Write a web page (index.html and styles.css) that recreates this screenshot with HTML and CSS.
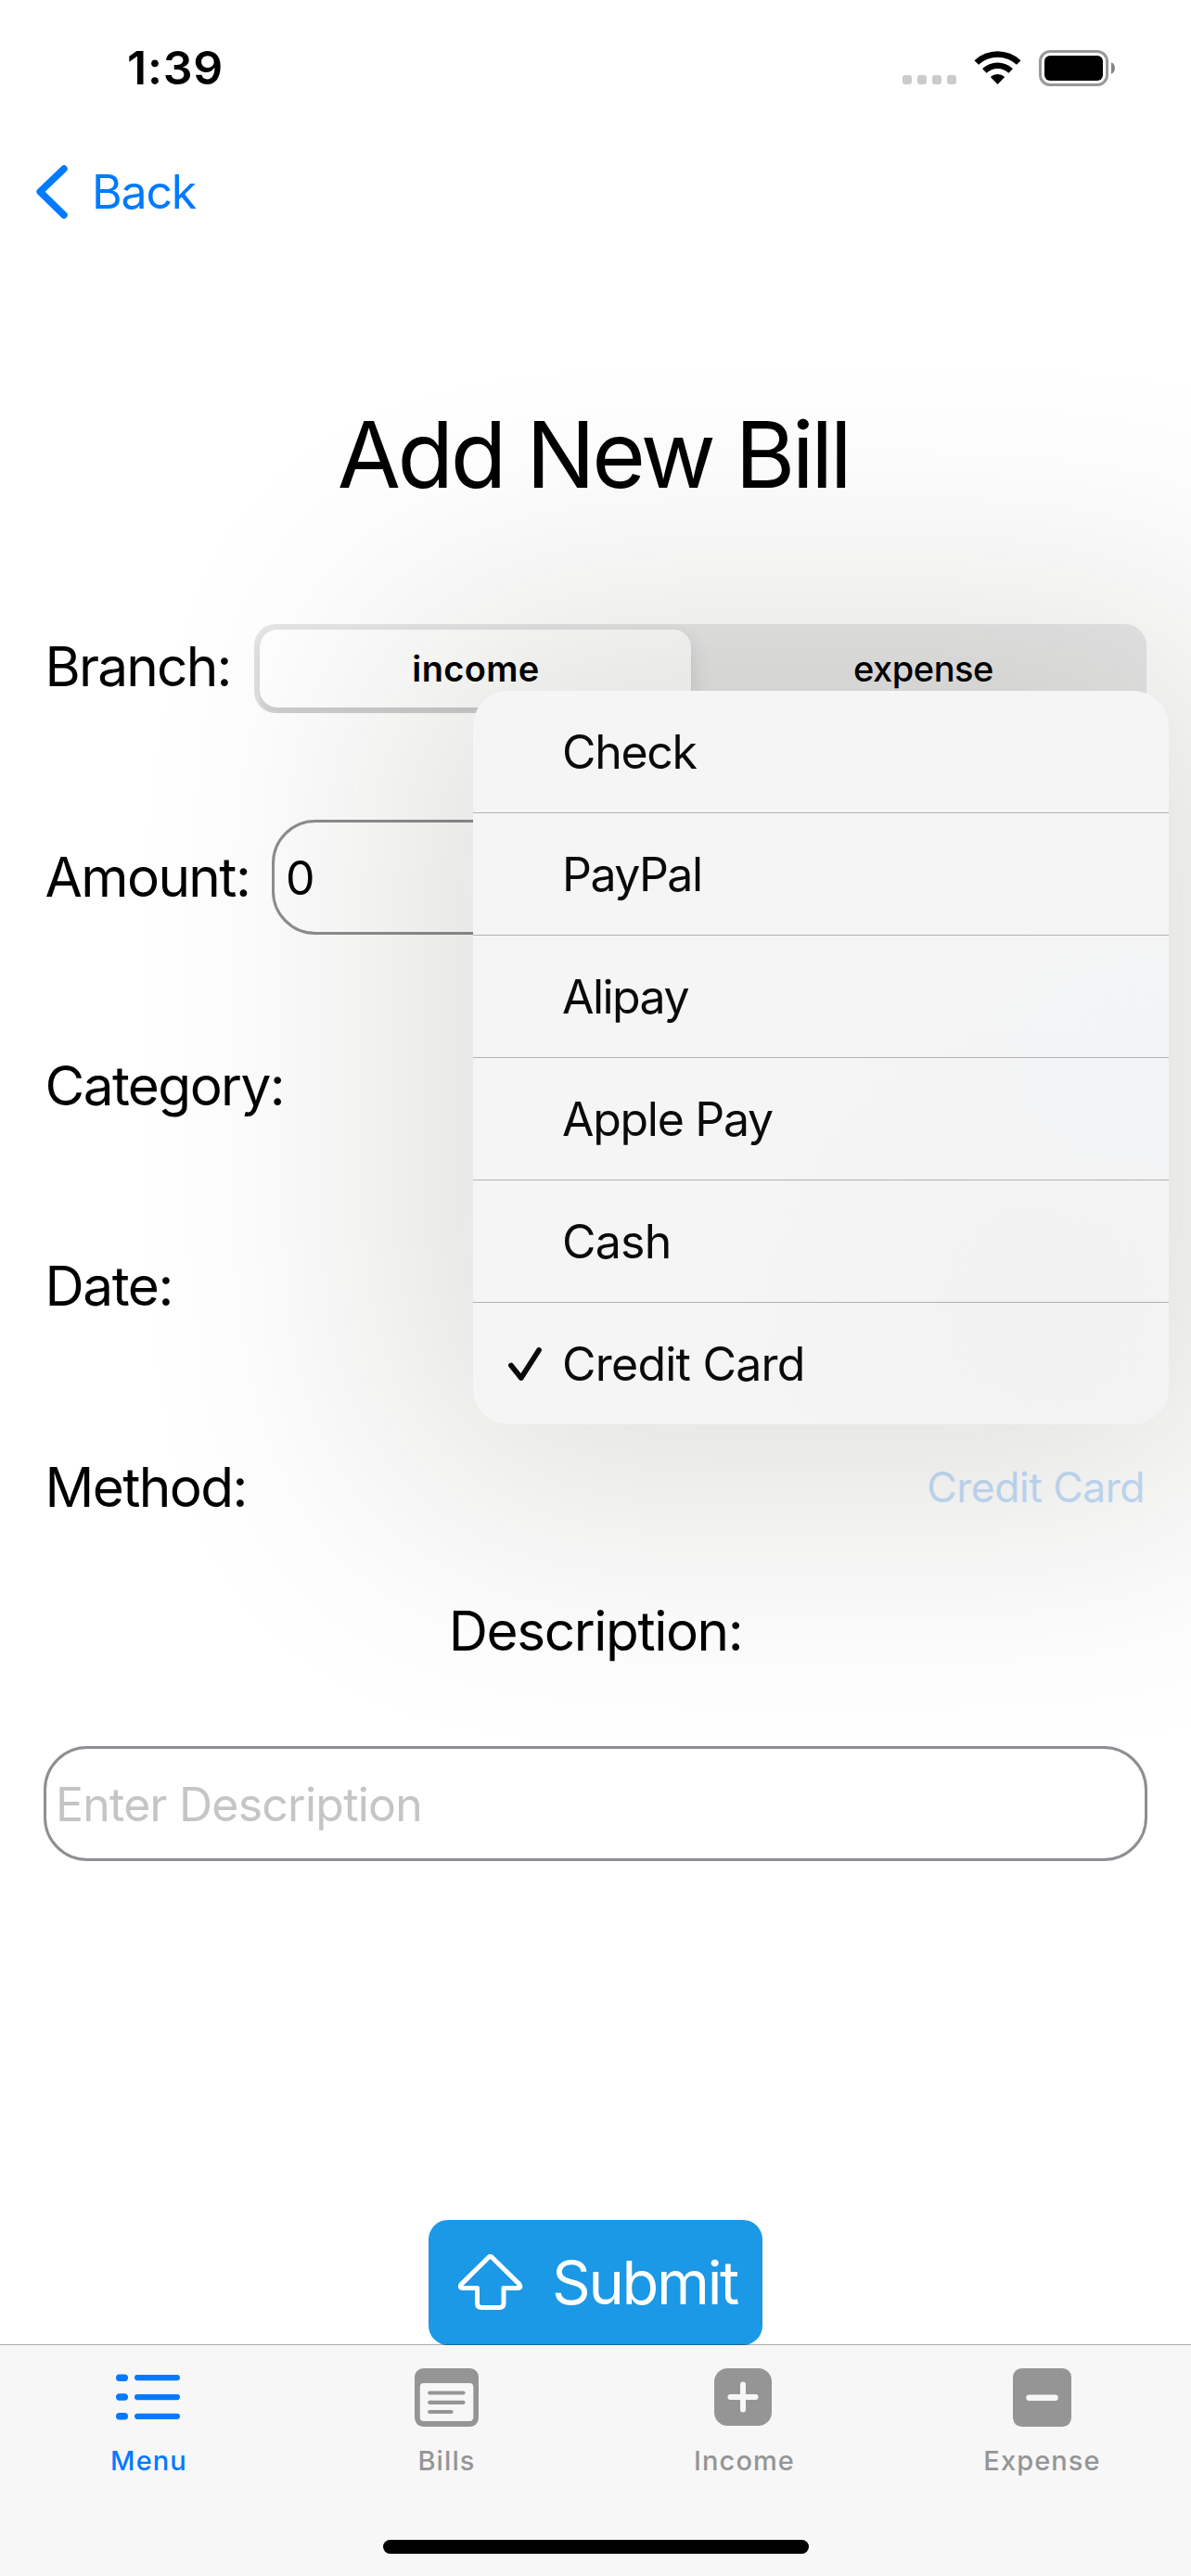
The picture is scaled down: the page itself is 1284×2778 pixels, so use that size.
FILE: index.html
```html
<!DOCTYPE html>
<html lang="en">
<head>
<meta charset="utf-8">
<title>Add New Bill</title>
<link rel="stylesheet" href="styles.css">
</head>
<body>
<div class="screen">
  <header class="status-bar">
    <span class="time">1:39</span>
    <div class="status-icons">
      <svg class="cellular" width="58" height="10" viewBox="0 0 58 10" fill="#cbcbcb">
        <rect width="10" height="10" rx="3"/><rect x="16" width="10" height="10" rx="3"/><rect x="32" width="10" height="10" rx="3"/><rect x="48" width="10" height="10" rx="3"/>
      </svg>
      <svg class="wifi" width="51" height="38" viewBox="0 0 51 38">
        <path d="M0.5 11.2 A36.5 36.5 0 0 1 50.5 11.2 L46 15.8 A30 30 0 0 0 5 15.8 Z"/>
        <path d="M9 20 A24 24 0 0 1 42 20 L37.4 24.7 A17.5 17.5 0 0 0 13.6 24.7 Z"/>
        <path d="M17.8 29 A11.5 11.5 0 0 1 33.2 29 L25.5 37 Z"/>
      </svg>
      <svg class="battery" width="83" height="39" viewBox="0 0 83 39">
        <rect x="1.5" y="1.5" width="72" height="36" rx="10.5" fill="none" stroke="#999" stroke-width="3"/>
        <rect x="6" y="6" width="63" height="27" rx="6"/>
        <path d="M78 13.2 C83.3 15.4 83.3 23.6 78 25.8 Z" fill="#858585"/>
      </svg>
    </div>
  </header>

  <nav class="nav-bar">
    <svg class="chevron" width="34" height="58" viewBox="0 0 34 58"><path d="M30 4 L4.2 28.8 L30 54" fill="none" stroke="#007aff" stroke-width="7.5" stroke-linecap="round" stroke-linejoin="round"/></svg>
    <span class="back">Back</span>
  </nav>

  <main class="form">
    <h1 class="title">Add New Bill</h1>
    <div class="row row-branch">
      <label class="label label-branch">Branch:</label>
      <div class="segmented">
        <span class="segment segment-on">income</span>
        <span class="segment segment-off">expense</span>
      </div>
    </div>
    <div class="row row-amount">
      <label class="label label-amount">Amount:</label>
      <div class="field field-amount">0</div>
    </div>
    <div class="row row-category"><label class="label label-category">Category:</label></div>
    <div class="row row-date"><label class="label label-date">Date:</label></div>
    <div class="row row-method">
      <label class="label label-method">Method:</label>
      <span class="method-value">Credit Card</span>
    </div>
    <div class="row row-description"><label class="label label-description">Description:</label></div>
    <div class="field field-description">Enter Description</div>
    <button class="submit">
      <svg width="70" height="61" viewBox="0 0 70 61"><path d="M32.9 3.2 Q34.6 1.7 36.3 3.2 L66 32.4 Q68.5 37 64 36.4 H49 V53 Q49 57.5 44.5 57.5 H25 Q20.500 57.500 20.500 53 V36.400 H5 Q.8 36.500 3.300 32.400 Z" fill="none" stroke="#fff" stroke-width="5" stroke-linejoin="round"/></svg>
      <span>Submit</span>
    </button>
  </main>

  <footer class="tab-bar">
    <div class="tabs">
      <div class="tab tab-active">
        <svg class="tab-icon" width="70" height="64" viewBox="0 0 70 64" fill="#007aff">
          <rect x="0" y="6.500" width="13" height="7.500" rx="3.750"/><rect x="20" y="7" width="49" height="6.200" rx="3.100"/>
          <rect x="0" y="27.200" width="13" height="7.500" rx="3.750"/><rect x="20" y="28" width="49" height="6.200" rx="3.100"/>
          <rect x="0" y="48" width="13" height="7.500" rx="3.750"/><rect x="20" y="48.700" width="49" height="6.200" rx="3.100"/>
        </svg>
        <span>Menu</span>
      </div>
      <div class="tab">
        <svg class="tab-icon" width="70" height="64" viewBox="0 0 70 64">
          <rect x="1" y="0" width="69" height="63" rx="9.500" fill="#959595"/>
          <rect x="6.800" y="16" width="57.500" height="41" rx="4" fill="#f7f7f7"/>
          <path d="M17.200 26.500 H53.500 M17.200 36.800 H53.500 M17.200 47 H40.500" stroke="#959595" stroke-width="4.200" stroke-linecap="round"/>
        </svg>
        <span>Bills</span>
      </div>
      <div class="tab">
        <svg class="tab-icon tab-icon-plus" width="62" height="64" viewBox="0 0 62 64">
          <rect width="62" height="62" rx="14.500" fill="#959595"/>
          <path d="M17.500 31 H44.500 M31 17.500 V44.500" stroke="#f7f7f7" stroke-width="6" stroke-linecap="round"/>
        </svg>
        <span>Income</span>
      </div>
      <div class="tab">
        <svg width="63" height="64" viewBox="0 0 63 64">
          <rect width="63" height="63" rx="9.500" fill="#959595"/>
          <path d="M17.500 31.700 H45.500" stroke="#f7f7f7" stroke-width="6.500" stroke-linecap="round"/>
        </svg>
        <span>Expense</span>
      </div>
    </div>
    <div class="home-indicator"></div>
  </footer>

  <div class="menu-shadow"></div>
  <ul class="menu">
    <li class="menu-item">Check</li>
    <li class="menu-item menu-item-tight">PayPal</li>
    <li class="menu-item menu-item-tight">Alipay</li>
    <li class="menu-item">Apple Pay</li>
    <li class="menu-item menu-item-loose">Cash</li>
    <li class="menu-item menu-item-loose"><svg class="check" width="37" height="37" viewBox="0 0 37 37"><path d="M3 19.500 L13.800 33 L33 3" fill="none" stroke="#0a0a0a" stroke-width="5.800" stroke-linecap="round" stroke-linejoin="round"/></svg>Credit Card</li>
  </ul>
</div>
</body>
</html>
```
FILE: styles.css
```css
* { box-sizing: border-box; }

body {
  margin: 0;
  background: #fff;
  color: #000;
  font-family: Inter, "Liberation Sans", sans-serif;
}

.screen {
  position: relative;
  display: flex;
  flex-direction: column;
  width: 1284px;
  height: 2778px;
  overflow: hidden;
  white-space: nowrap;
}

svg { display: block; flex: none; }

/* Status and navigation */
.status-bar {
  display: flex;
  justify-content: space-between;
  align-items: center;
  height: 146px;
  padding: 0 81px 0 137px;
}
.time { font-size: 50px; font-weight: 600; letter-spacing: .8px; }
.status-icons { display: flex; align-items: center; }
.cellular { margin-top: 26px; }
.wifi { margin: 0 19px; }

.nav-bar {
  display: flex;
  align-items: center;
  height: 122px;
  padding-left: 39px;
  color: #007aff;
}
.chevron { margin-right: 26px; }
.back { font-size: 50px; letter-spacing: -1.2px; }

/* Form */
.form {
  display: flex;
  flex-direction: column;
  height: 2261px;
  padding: 142px 47px 0;
}
.title {
  height: 160px;
  margin: 0 5px 103px 0;
  font-size: 99px;
  font-weight: 400;
  line-height: 160px;
  letter-spacing: -3.5px;
  text-align: center;
}
.row { display: flex; align-items: center; height: 60px; }
.label { padding-left: 1.5px; font-size: 58.5px; line-height: 60px; letter-spacing: -1.6px; }

.row-branch { height: 96px; }
.label-branch { width: 227px; padding-bottom: 4px; letter-spacing: -1.79px; line-height: 56px; }
.segmented {
  display: flex;
  width: 962px;
  height: 96px;
  padding: 6px;
  border-radius: 23px;
  background: #e9e9ea;
  overflow: hidden;
}
.segment {
  display: flex;
  align-items: center;
  justify-content: center;
  font-size: 38px;
  font-weight: 500;
}
.segment-on {
  width: 465px;
  padding-left: 1px;
  border-radius: 19px;
  background: #fff;
  box-shadow: 0 9px 24px rgba(0, 0, 0, .12), 0 9px 3px rgba(0, 0, 0, .04);
  font-weight: 600;
  letter-spacing: .36px;
}
.segment-off { flex: 1; padding-left: 16px; letter-spacing: -.47px; }

.field {
  display: flex;
  align-items: center;
  height: 124px;
  border: 3px solid #8e8e93;
  border-radius: 47px;
  font-size: 50px;
}
.row-amount { height: 124px; margin-top: 115px; }
.label-amount { width: 246px; }
.field-amount { flex: 1; padding: 1px 0 0 12px; }

.row-category { margin-top: 133px; }
.row-date { margin-top: 156px; }
.label-date { letter-spacing: -1.44px; }
.row-method { justify-content: space-between; margin-top: 157px; }
.method-value { padding-right: 3px; color: #c5defb; font-size: 44.5px; letter-spacing: -.51px; }
.row-description { justify-content: center; margin-top: 95px; }
.label-description { letter-spacing: -1.41px; padding: 0; }
.field-description {
  margin: 94px 0 387px;
  padding: 1px 0 0 10px;
  color: #c5c5c7;
  letter-spacing: -.76px;
}

.submit {
  display: flex;
  align-items: center;
  align-self: center;
  gap: 31px;
  width: 360px;
  height: 135px;
  padding: 0 0 0 32px;
  border: 0;
  border-radius: 21px;
  background: #1b98e6;
  color: #fff;
  font: 400 65px/135px Inter, "Liberation Sans", sans-serif;
  letter-spacing: -2.3px;
}

/* Tab bar */
.tab-bar {
  position: relative;
  height: 250px;
  margin-top: -1px;
  border-top: 1px solid rgba(0, 0, 0, .32);
  background: #f7f7f7;
  background-clip: padding-box;
}
.tabs { display: grid; grid-template-columns: repeat(4, 1fr); height: 210px; padding-top: 25px; }
.tab {
  display: flex;
  flex-direction: column;
  align-items: center;
  gap: 18px;
  color: #959595;
  font-size: 29px;
  font-weight: 500;
  line-height: 36px;
  letter-spacing: 1.1px;
}
.tab-active { color: #007aff; }
.tab-icon { margin-right: 1px; }
.tab-icon-plus { margin-right: 3px; }
.home-indicator { width: 459px; height: 15px; margin: 0 auto; border-radius: 8px; background: #000; }

/* Payment method pop-up, floating over the form */
.menu-shadow {
  position: absolute;
  left: 430px;
  top: 665px;
  width: 910px;
  height: 951px;
  background: #141400;
  opacity: .135;
  filter: blur(152px);
}
.menu {
  position: absolute;
  left: 510px;
  top: 745px;
  width: 750px;
  margin: 0;
  padding: 0;
  border-radius: 38px;
  background: radial-gradient(circle at 710px 400px, #f2f4f6, rgba(243, 244, 245, 0) 200px), radial-gradient(circle at 620px 660px, #f2f2f2, rgba(243, 243, 243, 0) 380px), #f5f5f5;
  list-style: none;
}
.menu-item {
  position: relative;
  height: 132px;
  padding: 1px 0 0 96px;
  border-bottom: 1px solid #b2b2b5;
  color: #0a0a0a;
  font-size: 50px;
  line-height: 131px;
  letter-spacing: -1.3px;
}
.menu-item:last-child { height: 131px; border-bottom: 0; }
.menu-item-tight { letter-spacing: -1.55px; }
.menu-item-loose { letter-spacing: -.76px; }
.check { position: absolute; left: 38px; top: 48px; }
```
